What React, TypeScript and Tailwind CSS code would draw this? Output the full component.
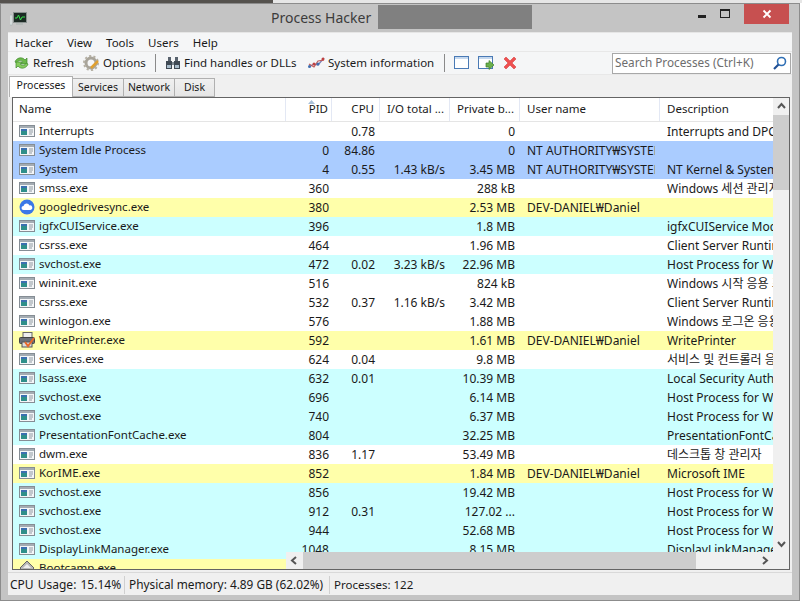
const font = "font-['Noto_Sans','Noto_Sans_CJK_KR',sans-serif]";

type Row = [string, string, string, string, string, string, string, string, string?];

const W = "bg-white";
const B = "bg-[#aaccff]";
const C = "bg-[#ccffff]";
const Y = "bg-[#ffffaa]";

const rows: Row[] = [
  ["Interrupts", "", "0.78", "", "0", "", "Interrupts and DPCs", W],
  ["System Idle Process", "0", "84.86", "", "0", "NT AUTHORITY₩SYSTEM", "", B],
  ["System", "4", "0.55", "1.43 kB/s", "3.45 MB", "NT AUTHORITY₩SYSTEM", "NT Kernel & System", B],
  ["smss.exe", "360", "", "", "288 kB", "", "Windows 세션 관리자", W],
  ["googledrivesync.exe", "380", "", "", "2.53 MB", "DEV-DANIEL₩Daniel", "", Y, "drive"],
  ["igfxCUIService.exe", "396", "", "", "1.8 MB", "", "igfxCUIService Module", C],
  ["csrss.exe", "464", "", "", "1.96 MB", "", "Client Server Runtime", W],
  ["svchost.exe", "472", "0.02", "3.23 kB/s", "22.96 MB", "", "Host Process for Windows", C],
  ["wininit.exe", "516", "", "", "824 kB", "", "Windows 시작 응용 프로그램", W],
  ["csrss.exe", "532", "0.37", "1.16 kB/s", "3.42 MB", "", "Client Server Runtime", W],
  ["winlogon.exe", "576", "", "", "1.88 MB", "", "Windows 로그온 응용 프로그램", W],
  ["WritePrinter.exe", "592", "", "", "1.61 MB", "DEV-DANIEL₩Daniel", "WritePrinter", Y, "printer"],
  ["services.exe", "624", "0.04", "", "9.8 MB", "", "서비스 및 컨트롤러 응용", W],
  ["lsass.exe", "632", "0.01", "", "10.39 MB", "", "Local Security Authority", C],
  ["svchost.exe", "696", "", "", "6.14 MB", "", "Host Process for Windows", C],
  ["svchost.exe", "740", "", "", "6.37 MB", "", "Host Process for Windows", C],
  ["PresentationFontCache.exe", "804", "", "", "32.25 MB", "", "PresentationFontCache", C],
  ["dwm.exe", "836", "1.17", "", "53.49 MB", "", "데스크톱 창 관리자", W],
  ["KorIME.exe", "852", "", "", "1.84 MB", "DEV-DANIEL₩Daniel", "Microsoft IME", Y],
  ["svchost.exe", "856", "", "", "19.42 MB", "", "Host Process for Windows", C],
  ["svchost.exe", "912", "0.31", "", "127.02 ...", "", "Host Process for Windows", C],
  ["svchost.exe", "944", "", "", "52.68 MB", "", "Host Process for Windows", C],
  ["DisplayLinkManager.exe", "1048", "", "", "8.15 MB", "", "DisplayLinkManager", C],
  ["Bootcamp.exe", "1096", "", "", "4.2 MB", "DEV-DANIEL₩Daniel", "Bootcamp", Y, "boot"],
];

function WinIcon() {
  return (
    <svg width="16" height="12" viewBox="0 0 16 12" className="shrink-0">
      <rect x="0.5" y="0.5" width="15" height="11" fill="#f4f6f8" stroke="#858d94" />
      <rect x="1" y="1" width="14" height="2" fill="#a4acb3" />
      <rect x="2" y="4" width="6" height="6" fill="#2f8f8a" />
      <rect x="2" y="4" width="6" height="2" fill="#3b6fb0" />
      <path d="M10 5h4M10 7h4M10 9h3" stroke="#8f99a1" />
    </svg>
  );
}

function DriveIcon() {
  return (
    <svg width="16" height="16" viewBox="0 0 16 16" className="shrink-0">
      <circle cx="8" cy="8" r="7.5" fill="#3b78e7" />
      <path d="M4.500 11a2 2 0 0 1 0-4 3.200 3.200 0 0 1 6-.6A2.300 2.300 0 0 1 11.500 11z" fill="#fff" />
    </svg>
  );
}

function PrinterIcon() {
  return (
    <svg width="17" height="16" viewBox="0 0 17 16" className="shrink-0">
      <rect x="4" y="0.5" width="9" height="6" fill="#eee" stroke="#666" />
      <rect x="0.5" y="5.5" width="15" height="6" rx="1" fill="#6b7078" stroke="#444" />
      <rect x="3" y="10" width="10" height="5" fill="#ddd" stroke="#555" />
      <path d="M6 10l3 4 6-8" stroke="#e8682a" strokeWidth="2" fill="none" />
    </svg>
  );
}

function BootIcon() {
  return (
    <svg width="16" height="16" viewBox="0 0 16 16" className="shrink-0">
      <path d="M8 1 15 8 8 15 1 8z" fill="#b8b8b8" stroke="#666" />
      <path d="M8 4 12 8H4z" fill="#eee" />
    </svg>
  );
}

function ProcIcon({ kind }: { kind?: string }) {
  if (kind === "drive") return <DriveIcon />;
  if (kind === "printer") return <PrinterIcon />;
  if (kind === "boot") return <BootIcon />;
  return <WinIcon />;
}

function Header({ children, className }: { children?: React.ReactNode; className: string }) {
  return (
    <div className={`flex h-full shrink-0 items-center truncate border-r border-[#e3e8f4] pb-[2px] text-[11.5px] ${className}`}>
      {children}
    </div>
  );
}

function AppIcon() {
  return (
    <svg width="17" height="16" viewBox="0 0 17 16">
      <rect x="3.5" y="1.5" width="13" height="10" fill="#1c2a24" stroke="#8a9290" />
      <path d="M5 7h2l1.500-3 2 5 1.500-3h3" stroke="#35e04a" fill="none" />
      <rect x="0" y="4" width="2" height="10" fill="#e8eceb" stroke="#9aa" strokeWidth="0.5" />
      <path d="M6 12h7v2H6z" fill="#b5bbb9" />
    </svg>
  );
}

function RefreshIcon() {
  return (
    <svg width="17" height="16" viewBox="0 0 17 16">
      <path d="M2 7c1-4 7-6 10-2l2-2v6H8l2-2C8 5 5 5 4 8z" fill="#6cb84a" stroke="#3f8a2c" strokeWidth="0.7" />
      <path d="M15 9c-1 4-7 6-10 2l-2 2V7h6L7 9c2 2 5 2 6-1z" fill="#86cc5e" stroke="#3f8a2c" strokeWidth="0.7" />
    </svg>
  );
}

function GearIcon() {
  return (
    <svg width="17" height="17" viewBox="0 0 17 17">
      <circle cx="8" cy="8" r="5" fill="none" stroke="#a8a49a" strokeWidth="3" />
      <circle cx="8" cy="8" r="7" fill="none" stroke="#b5b0a4" strokeWidth="2" strokeDasharray="2.200 2.200" />
      <path d="M8 13 15 6" stroke="#e0a030" strokeWidth="2.500" />
    </svg>
  );
}

function BinocularsIcon() {
  return (
    <svg width="16" height="14" viewBox="0 0 16 14">
      <rect x="3" y="1" width="3" height="4" fill="#59636e" />
      <rect x="10" y="1" width="3" height="4" fill="#59636e" />
      <rect x="1" y="5" width="6" height="8" fill="#3f4954" />
      <rect x="9" y="5" width="6" height="8" fill="#3f4954" />
      <rect x="7" y="6" width="2" height="3" fill="#7f8a93" />
      <rect x="2" y="9" width="4" height="3" fill="#a9bdcc" />
      <rect x="10" y="9" width="4" height="3" fill="#a9bdcc" />
    </svg>
  );
}

function SysInfoIcon() {
  return (
    <svg width="17" height="14" viewBox="0 0 17 14">
      <path d="M1 11 6 8 10 9 16 2" stroke="#7a7fb5" strokeWidth="1.200" fill="none" />
      <path d="M1 8 6 11 10 5 16 4" stroke="#c05a5a" strokeWidth="1.200" fill="none" />
      <circle cx="1.500" cy="10.500" r="1.500" fill="#3f6fb0" />
      <circle cx="6" cy="8" r="1.500" fill="#c04040" />
      <circle cx="10" cy="8" r="1.500" fill="#3f6fb0" />
      <circle cx="15" cy="3" r="1.500" fill="#c04040" />
    </svg>
  );
}

function PaneIcon({ arrow }: { arrow?: boolean }) {
  return (
    <svg width="17" height="15" viewBox="0 0 17 15">
      <rect x="0.500" y="0.500" width="14" height="12" fill="#fff" stroke="#4a7ab5" />
      <rect x="1" y="1" width="13" height="2" fill="#c5d8ee" />
      {arrow && <path d="M8 7h3V4.500L16 9l-5 4.500V11H8z" fill="#6bb04a" stroke="#3f7f2c" strokeWidth="0.700" />}
    </svg>
  );
}

function RedX() {
  return (
    <svg width="14" height="14" viewBox="0 0 14 14">
      <path d="M3 1 7 5 11 1 13 3 9 7 13 11 11 13 7 9 3 13 1 11 5 7 1 3z" fill="#ee5050" stroke="#d84040" strokeWidth="0.600" />
    </svg>
  );
}

function SearchIcon() {
  return (
    <svg width="14" height="14" viewBox="0 0 14 14">
      <circle cx="8.500" cy="5.500" r="4" fill="#fff" stroke="#2f6fb5" strokeWidth="1.600" />
      <path d="M5.500 8.500 1 13" stroke="#1f4f95" strokeWidth="2.200" />
    </svg>
  );
}

function Chevron({ d }: { d: string }) {
  return (
    <svg width="9" height="9" viewBox="0 0 9 9">
      <path d={d} stroke="#555" strokeWidth="2" fill="none" />
    </svg>
  );
}

function Tab({ label, active, className }: { label: string; active?: boolean; className: string }) {
  return active ? (
    <div className={`flex h-[21px] items-center justify-center border border-b-0 border-[#b0b0b0] bg-white pb-[2px] ${className}`}>
      {label}
    </div>
  ) : (
    <div className={`-ml-px flex h-[19px] items-center justify-center border border-[#b0b0b0] bg-gradient-to-b from-[#f0f0f0] to-[#e5e5e5] ${className}`}>
      {label}
    </div>
  );
}

export default function App() {
  return (
    <div className={`h-[604px] w-[802px] overflow-hidden bg-white text-[12px] text-[#1a1a1a] ${font}`}>
      <div className="flex h-[3px]">
        <div className="w-[273px] bg-[#55524e]" />
        <div className="flex-1 bg-[#e6e6e6]" />
      </div>
      <div className="flex h-[598px] w-[800px] flex-col border border-[#8c8c8c] bg-[#c4c4c4] px-[7px]">
        {/* title bar */}
        <div className="flex h-[28px] shrink-0 items-start">
          <div className="ml-[2px] mt-[7px] w-[261px]">
            <AppIcon />
          </div>
          <div className="mt-[3px] w-[107px] text-[14px] whitespace-nowrap text-[#3c3c3c]">Process Hacker</div>
          <div className="mt-[1px] h-[24px] w-[154px] bg-[#808080]" />
          <div className="ml-[166px] mt-[11px] h-[3px] w-[8px] bg-[#222]" />
          <div className="ml-[14px] mt-[5px] h-[9px] w-[10px] border border-t-2 border-[#222]" />
          <div className="ml-[14px] flex h-[20px] w-[45px] items-center justify-center bg-[#c75050]">
            <svg width="10" height="10" viewBox="0 0 10 10">
              <path d="M1.500 1.500 8.500 8.500M8.500 1.500 1.500 8.500" stroke="#fff" strokeWidth="1.800" />
            </svg>
          </div>
        </div>

        {/* client */}
        <div className="flex min-h-0 flex-1 flex-col bg-[#f0f0f0]">
          <div className="flex h-[19px] shrink-0 items-center gap-[14px] border-t border-[#e6e6e6] bg-[#f5f6f7] pl-[7px] pt-[1px] text-[11.5px]">
            <span>Hacker</span>
            <span>View</span>
            <span>Tools</span>
            <span>Users</span>
            <span>Help</span>
          </div>
          <div className="flex h-[24px] shrink-0 items-center border-y border-[#e8e8e8] bg-[#f5f6f7] pl-[5px] text-[11.5px]">
            <RefreshIcon />
            <span className="ml-[3px] w-[39px]">Refresh</span>
            <span className="ml-[11px]"><GearIcon /></span>
            <span className="ml-[3px] w-[42px]">Options</span>
            <div className="ml-[10px] h-[18px] w-px bg-[#8a8a8a]" />
            <span className="ml-[9px]"><BinocularsIcon /></span>
            <span className="ml-[3px] w-[113px] whitespace-nowrap">Find handles or DLLs</span>
            <span className="ml-[11px]"><SysInfoIcon /></span>
            <span className="ml-[3px] w-[106px] whitespace-nowrap">System information</span>
            <div className="ml-[10px] h-[18px] w-px bg-[#8a8a8a]" />
            <span className="ml-[9px]"><PaneIcon /></span>
            <span className="ml-[7px]"><PaneIcon arrow /></span>
            <span className="ml-[8px]"><RedX /></span>
            <div className="ml-auto mr-[1px] flex h-[21px] w-[179px] items-center justify-between border border-[#a8a8a8] bg-white pl-[2px] pr-[3px] text-[11.75px] text-[#6d6d6d]">
              <span>Search Processes (Ctrl+K)</span>
              <SearchIcon />
            </div>
          </div>

          {/* tabs */}
          <div className="flex h-[22px] shrink-0 items-end pl-[1px] text-[10.5px]">
            <Tab label="Processes" active className="w-[64px]" />
            <Tab label="Services" className="w-[52px]" />
            <Tab label="Network" className="w-[52px]" />
            <Tab label="Disk" className="w-[41px]" />
          </div>

          {/* list */}
          <div className="ml-[4px] mr-[2px] flex h-[473px] shrink-0 border border-[#646464] bg-white">
            <div className="flex min-w-0 flex-1">
              <div className="flex min-w-0 flex-1 flex-col overflow-hidden">
                <div className="flex h-[24px] shrink-0 border-b border-[#e5e5e5]">
                  <Header className="w-[273px] pl-[6px]">Name</Header>
                  <Header className="relative w-[46px] justify-end pr-[3px]">
                    <svg width="7" height="4" viewBox="0 0 7 4" className="absolute left-[22px] top-[2px]">
                      <path d="M0 4 3.500 0 7 4z" fill="#a8c0d8" />
                    </svg>
                    PID
                  </Header>
                  <Header className="w-[48px] justify-end pr-[5px]">CPU</Header>
                  <Header className="w-[70px] justify-end pr-[5px]">I/O total ...</Header>
                  <Header className="w-[70px] justify-end pr-[5px]">Private b...</Header>
                  <Header className="w-[140px] pl-[7px]">User name</Header>
                  <Header className="min-w-0 flex-1 border-r-0 pl-[7px]">Description</Header>
                </div>
                <div className="flex min-h-0 flex-1 overflow-hidden">
                  <div className="h-full w-[273px] shrink-0 overflow-hidden">
                    {rows.map((r, i) => (
                      <div key={i} className={`flex h-[19px] items-center whitespace-nowrap pb-[2px] pl-[6px] text-[11.5px] ${r[7]}`}>
                        <ProcIcon kind={r[8]} />
                        <span className={r[8] === "printer" ? "ml-[3px]" : "ml-[4px]"}>{r[0]}</span>
                      </div>
                    ))}
                  </div>
                  <div className="flex min-w-0 flex-1 flex-col">
                    <div className="min-h-0 flex-1 overflow-hidden">
                      {rows.map((r, i) => (
                        <div key={i} className={`flex h-[19px] items-center whitespace-nowrap ${r[7]}`}>
                          <span className="w-[43px] shrink-0 text-right">{r[1]}</span>
                          <span className="w-[46px] shrink-0 text-right">{r[2]}</span>
                          <span className="w-[70px] shrink-0 text-right">{r[3]}</span>
                          <span className="w-[70px] shrink-0 text-right">{r[4]}</span>
                          <span className="ml-[12px] w-[128px] shrink-0 overflow-hidden">{r[5]}</span>
                          <span className="ml-[12px] min-w-0 flex-1 overflow-hidden">{r[6]}</span>
                        </div>
                      ))}
                    </div>
                    <div className="flex h-[17px] shrink-0 items-center bg-[#f0f0f0]">
                      <div className="flex w-[17px] shrink-0 justify-center"><Chevron d="M6 1 2 4.500 6 8" /></div>
                      <div className="h-full w-[393px] bg-[#cdcdcd]" />
                      <div className="ml-auto flex w-[17px] shrink-0 justify-center"><Chevron d="M3 1 7 4.500 3 8" /></div>
                    </div>
                  </div>
                </div>
              </div>
              <div className="flex w-[16px] shrink-0 flex-col items-stretch bg-[#f0f0f0] pb-[17px]">
                <div className="flex h-[17px] items-center justify-center"><Chevron d="M1 6 4.500 2 8 6" /></div>
                <div className="h-[75px] bg-[#cdcdcd]" />
                <div className="mt-auto flex h-[17px] items-center justify-center"><Chevron d="M1 3 4.500 7 8 3" /></div>
              </div>
            </div>
          </div>

          {/* status bar */}
          <div className="mt-[2px] flex h-[24px] shrink-0 items-center border-t border-[#d9d9d9]">
            <div className="flex h-[18px] w-[117px] items-center whitespace-nowrap border-r border-[#d0d0d0] pl-[2px] [word-spacing:1px]">CPU Usage: 15.14%</div>
            <div className="flex h-[18px] w-[205px] items-center whitespace-nowrap border-r border-[#d0d0d0] pl-[4px] text-[11.85px]">Physical memory: 4.89 GB (62.02%)</div>
            <div className="flex h-[18px] items-center pl-[4px] text-[11.5px]">Processes: 122</div>
          </div>
        </div>
        <div className="h-[5px] shrink-0" />
      </div>
    </div>
  );
}
